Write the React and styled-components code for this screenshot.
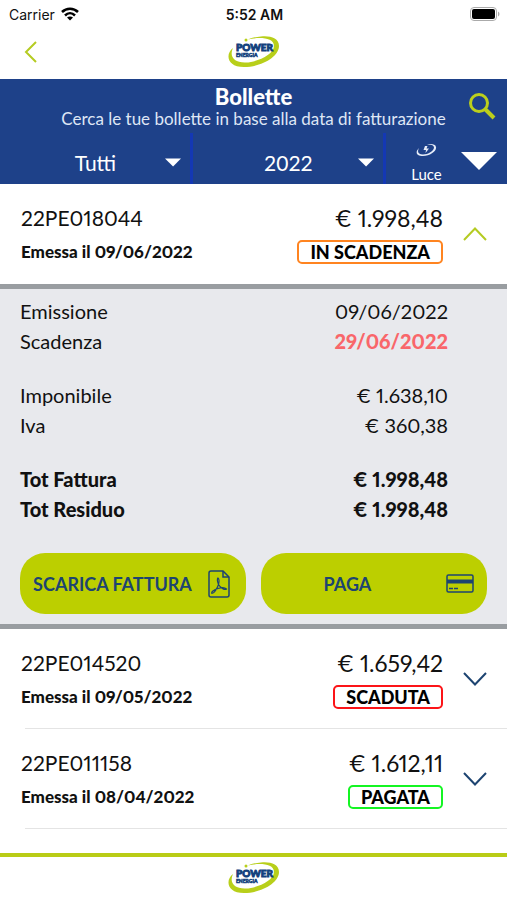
import React, { useState } from 'react';
import styled, { createGlobalStyle } from 'styled-components';

const GlobalStyle = createGlobalStyle`
  * {
    box-sizing: border-box;
  }

  body {
    margin: 0;
    background-color: #fff;
    color: #111;
    font-family: Lato, 'Liberation Sans', sans-serif;
    font-variant-numeric: proportional-nums;
  }

  button,
  select {
    font-family: inherit;
    color: inherit;
    border: none;
    background: none;
    padding: 0;
    cursor: pointer;
  }
`;

const Main = styled.div`
  display: flex;
  flex-direction: column;
  height: 100vh;
`;

const StatusBar = styled.div`
  display: grid;
  grid-template-columns: 1fr auto 1fr;
  align-items: center;
  height: 28px;
  padding: 0 7px 0 9px;
  font-family: Inter, sans-serif;
  font-size: 14px;
`;

const Carrier = styled.span`
  display: flex;
  align-items: center;
  gap: 6px;
`;

const Clock = styled.span`
  font-weight: 600;
`;

const Battery = styled.svg`
  justify-self: end;
`;

const NavBar = styled.header`
  display: grid;
  grid-template-columns: 1fr auto 1fr;
  align-items: center;
  height: 51px;
  padding: 0 24px 3px;
`;

const BackButton = styled.button`
  display: flex;
  justify-self: start;
`;

const Head = styled.section`
  background-color: #1e4189;
  color: #fff;
`;

const HeadTop = styled.div`
  display: grid;
  grid-template-columns: 50px 1fr 50px;
  align-items: center;
  height: 54px;
  text-align: center;
`;

const Title = styled.h1`
  margin: 0;
  font-size: 22px;
  line-height: 24px;
  font-weight: 900;
`;

const Subtitle = styled.p`
  margin: 0;
  font-size: 17px;
  line-height: 20px;
  color: #dfe6f5;
  white-space: nowrap;
`;

const HeadText = styled.div`
  grid-column: 2;
  display: flex;
  flex-direction: column;
  align-items: center;
  padding-top: 2px;
`;

const SearchButton = styled.button`
  display: flex;
  justify-self: center;
`;

const Filters = styled.div`
  display: grid;
  grid-template-columns: 193fr 193fr 121fr;
  height: 51px;
`;

const Filter = styled.label`
  display: flex;
  align-items: center;
  padding: ${(p) => p.padding || '8px 9px 0 0'};
  border-right: ${(p) => (p.last ? 'none' : '3px solid #1438b4')};
`;

const FilterBody = styled.span`
  flex: 1;
  display: flex;
  flex-direction: column;
  align-items: center;
  gap: 7px;
  padding-top: 6px;
`;

const Select = styled.select`
  appearance: none;
  width: 100%;
  outline: none;
  text-align: center;
  text-align-last: center;
  padding-left: ${(p) => (p.small ? '0' : '26px')};
  font-size: ${(p) => (p.small ? '15px' : '21px')};
  line-height: ${(p) => (p.small ? '20px' : '24px')};
`;

const List = styled.main`
  flex: 1;
  min-height: 0;
  overflow-y: auto;
  scrollbar-width: none;
`;

const Row = styled.article`
  display: flex;
  align-items: center;
  height: 100px;
  padding: 0 20px 0 21px;
`;

const Divider = styled.hr`
  height: 1px;
  margin: -1px 0 0 25px;
  border: none;
  background-color: #e4e4e4;
`;

const RowInfo = styled.div`
  flex: 1;
`;

const Code = styled.div`
  font-size: 21px;
  line-height: 36px;
`;

const Issued = styled.div`
  font-size: 17px;
  line-height: 32px;
  font-weight: 900;
`;

const RowStatus = styled.div`
  display: flex;
  flex-direction: column;
  align-items: flex-end;
  padding: 0 20px 4px 0;
`;

const Amount = styled.div`
  font-size: 23px;
  line-height: 36px;
`;

const Badge = styled.span`
  margin-top: 4px;
  padding: 0 11px;
  border: 2px solid ${(p) => p.color};
  border-radius: 5px;
  font-size: 18px;
  line-height: 20px;
  font-weight: 900;
  color: #000;
`;

const Toggle = styled.button`
  display: flex;
`;

const Panel = styled.section`
  padding: 7px 20px 10px;
  border-top: 5px solid #999da1;
  border-bottom: 5px solid #999da1;
  background-color: #e8e9ed;
`;

const Details = styled.dl`
  margin: 0 39px 24px 0;
`;

const Detail = styled.div`
  display: flex;
  justify-content: space-between;
  font-size: 20px;
  line-height: 30px;
  font-weight: ${(p) => (p.bold ? 900 : 400)};
`;

const Label = styled.dt`
  margin: 0;
`;

const Value = styled.dd`
  margin: 0;
  color: ${(p) => (p.late ? '#f9666a' : 'inherit')};
  font-weight: ${(p) => (p.late ? 900 : 'inherit')};
`;

const Actions = styled.div`
  display: grid;
  grid-template-columns: 1fr 1fr;
  gap: 15px;
  padding-top: 5px;
`;

const Action = styled.button`
  && {
    display: flex;
    align-items: center;
    gap: 12px;
    height: 61px;
    padding: ${(p) => p.padding};
    border-radius: 25px;
    background-color: #bccf00;
    color: #1d4471;
    font-size: 18px;
    font-weight: 700;
  }
`;

const ActionText = styled.span`
  flex: 1;
  white-space: nowrap;
`;

const Footer = styled.footer`
  display: flex;
  justify-content: center;
  height: 47px;
  padding-top: 4px;
  border-top: 4px solid #b9cc16;
  background-color: #fff;
`;

const Logo = () => (
  <svg width="52" height="34" viewBox="0 0 52 34" role="img" aria-label="Power Energia">
    <path
      d="M5 13C-3 19 -1 32 16 32C33 32 51 22 51 11C51 3 42 0.500 33 1.500C27 2 23 3 20 4.500C30 2 46 2 46 11C46 19 30 27 18 27.500C6 28 1 21 5 13Z"
      fill="#b8cf1a"
    />
    <circle cx="18" cy="5" r="1.500" fill="#b8cf1a" />
    <text
      x="8"
      y="16"
      fontFamily="Lato, sans-serif"
      fontSize="10"
      fontWeight="900"
      fill="#12407c"
      stroke="#12407c"
      strokeWidth="0.900"
    >
      POWER
    </text>
    <text
      x="8"
      y="22"
      fontFamily="Lato, sans-serif"
      fontSize="5"
      fontWeight="900"
      fill="#12407c"
      stroke="#12407c"
      strokeWidth="0.500"
    >
      ENERGIA
    </text>
  </svg>
);

const Caret = ({ big }) => (
  <svg width={big ? 36 : 18} height={big ? 18 : 9} viewBox="0 0 36 18" aria-hidden="true">
    <path d="M0 0H36L18 18Z" fill="#fff" />
  </svg>
);

const Chevron = ({ up }) => (
  <svg width="24" height="14" viewBox="0 0 24 14" fill="none" strokeWidth="2">
    {up ? (
      <path d="M1 13L12 1.500L23 13" stroke="#b5cb22" />
    ) : (
      <path d="M1 1L12 12.500L23 1" stroke="#1d4471" />
    )}
  </svg>
);

const LuceIcon = () => (
  <svg width="21" height="14" viewBox="0 0 21 14" aria-hidden="true">
    <path
      d="M3 5C-1 9 0 13 7 13C14 13 21 8 20 4C19.500 1 15 0.500 11 1.500C15 1.200 18 2 18 4.500C18 8 12 11.500 7 11.500C2 11.500 1 9 3 5Z"
      fill="#e6ecf8"
    />
    <path d="M9 3L7.500 7H10L9.500 10L13 5.500H10.500L11.500 3Z" fill="#e6ecf8" />
  </svg>
);

const PdfIcon = () => (
  <svg width="22" height="28" viewBox="0 0 22 28" fill="none" stroke="#1d4471" strokeWidth="1.500">
    <path d="M3 1H15L21 7V25A2 2 0 0 1 19 27H3A2 2 0 0 1 1 25V3A2 2 0 0 1 3 1Z" />
    <path d="M15 1V7H21" />
    <path
      d="M10 8C9 9 9.500 12 10.500 14.500C9 19 6 23.500 4 23.500C2.500 22.500 6 19.500 10 18.500C13 17.500 17 17.500 18.500 19C17 20.500 12.500 18 10.500 14.500C11.500 11.500 11 8.500 10 8Z"
      strokeWidth="1.200"
    />
  </svg>
);

const CardIcon = () => (
  <svg width="28" height="19" viewBox="0 0 28 19" fill="none" stroke="#1d4471">
    <rect x="1" y="1" width="26" height="17" rx="1.500" strokeWidth="1.500" />
    <path d="M1 7.500H27" strokeWidth="4" />
    <path d="M3 14.500H7M8 14.500H12" strokeWidth="1.500" />
  </svg>
);

const bills = [
  {
    code: '22PE018044',
    issued: '09/06/2022',
    amount: '€ 1.998,48',
    status: 'IN SCADENZA',
    color: '#ff8420',
  },
  {
    code: '22PE014520',
    issued: '09/05/2022',
    amount: '€ 1.659,42',
    status: 'SCADUTA',
    color: '#fc1418',
  },
  {
    code: '22PE011158',
    issued: '08/04/2022',
    amount: '€ 1.612,11',
    status: 'PAGATA',
    color: '#14f523',
  },
  {
    code: '22PE007731',
    issued: '08/03/2022',
    amount: '€ 984,20',
    status: 'PAGATA',
    color: '#14f523',
  },
];

const BillPanel = () => (
  <Panel>
    <Details>
      <Detail>
        <Label>Emissione</Label>
        <Value>09/06/2022</Value>
      </Detail>
      <Detail>
        <Label>Scadenza</Label>
        <Value late>29/06/2022</Value>
      </Detail>
    </Details>
    <Details>
      <Detail>
        <Label>Imponibile</Label>
        <Value>€ 1.638,10</Value>
      </Detail>
      <Detail>
        <Label>Iva</Label>
        <Value>€ 360,38</Value>
      </Detail>
    </Details>
    <Details>
      <Detail bold>
        <Label>Tot Fattura</Label>
        <Value>€ 1.998,48</Value>
      </Detail>
      <Detail bold>
        <Label>Tot Residuo</Label>
        <Value>€ 1.998,48</Value>
      </Detail>
    </Details>
    <Actions>
      <Action type="button" padding="0 16px 0 9px">
        <ActionText>SCARICA FATTURA</ActionText>
        <PdfIcon />
      </Action>
      <Action type="button" padding="0 13px 0 0">
        <ActionText>PAGA</ActionText>
        <CardIcon />
      </Action>
    </Actions>
  </Panel>
);

const App = () => {
  const [open, setOpen] = useState('22PE018044');

  const toggleHandler = (code) => {
    setOpen(open === code ? '' : code);
  };

  return (
    <Main>
      <GlobalStyle />
      <StatusBar>
        <Carrier>
          Carrier
          <svg width="18" height="14" viewBox="0 0 18 14" fill="none" stroke="#000" strokeWidth="2.500">
            <path d="M1 5C5.500 0.500 12.500 0.500 17 5" />
            <path d="M4 8.500C7 5.500 11 5.500 14 8.500" />
            <path d="M9 13.500L6 10.500C7.500 9 10.500 9 12 10.500Z" fill="#000" stroke="none" />
          </svg>
        </Carrier>
        <Clock>5:52 AM</Clock>
        <Battery width="30" height="14" viewBox="0 0 30 14">
          <rect x="0.500" y="0.500" width="26" height="13" rx="3.500" fill="#fff" stroke="#aaa" />
          <rect x="2" y="2" width="23" height="10" rx="2" fill="#000" />
          <path d="M28 4.500C30 5.500 30 8.500 28 9.500Z" fill="#aaa" />
        </Battery>
      </StatusBar>
      <NavBar>
        <BackButton type="button" aria-label="Indietro">
          <svg width="13" height="22" viewBox="0 0 13 22" fill="none" stroke="#b5cb22" strokeWidth="2">
            <path d="M12 1L2 11L12 21" />
          </svg>
        </BackButton>
        <Logo />
      </NavBar>
      <Head>
        <HeadTop>
          <HeadText>
            <Title>Bollette</Title>
            <Subtitle>Cerca le tue bollette in base alla data di fatturazione</Subtitle>
          </HeadText>
          <SearchButton type="button" aria-label="Cerca">
            <svg width="28" height="28" viewBox="0 0 28 28" fill="none" stroke="#bccf1c" strokeWidth="3">
              <circle cx="11" cy="11" r="8.500" />
              <path d="M17 17L26 26" strokeWidth="4" />
            </svg>
          </SearchButton>
        </HeadTop>
        <Filters>
          <Filter>
            <Select aria-label="Stato" defaultValue="Tutti">
              <option>Tutti</option>
            </Select>
            <Caret />
          </Filter>
          <Filter>
            <Select aria-label="Anno" defaultValue="2022">
              <option>2022</option>
            </Select>
            <Caret />
          </Filter>
          <Filter last padding="4px 10px 0 6px">
            <FilterBody>
              <LuceIcon />
              <Select small aria-label="Fornitura" defaultValue="Luce">
                <option>Luce</option>
              </Select>
            </FilterBody>
            <Caret big />
          </Filter>
        </Filters>
      </Head>
      <List>
        {bills.map((bill) => (
          <React.Fragment key={bill.code}>
            <Row>
              <RowInfo>
                <Code>{bill.code}</Code>
                <Issued>Emessa il {bill.issued}</Issued>
              </RowInfo>
              <RowStatus>
                <Amount>{bill.amount}</Amount>
                <Badge color={bill.color}>{bill.status}</Badge>
              </RowStatus>
              <Toggle
                type="button"
                aria-label={`Dettagli ${bill.code}`}
                aria-expanded={open === bill.code}
                onClick={() => toggleHandler(bill.code)}
              >
                <Chevron up={open === bill.code} />
              </Toggle>
            </Row>
            {open === bill.code ? <BillPanel /> : <Divider />}
          </React.Fragment>
        ))}
      </List>
      <Footer>
        <Logo />
      </Footer>
    </Main>
  );
};

export default App;
